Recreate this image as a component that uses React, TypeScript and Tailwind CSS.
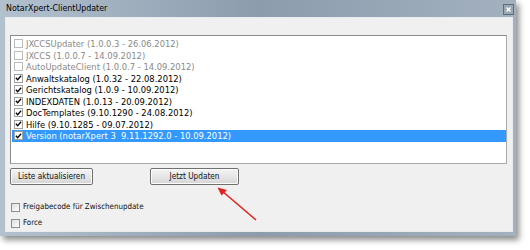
import React from "react";

type Item = { label: string; checked: boolean; disabled?: boolean; selected?: boolean };

const items: Item[] = [
  { label: "JXCCSUpdater (1.0.0.3 - 26.06.2012)", checked: false, disabled: true },
  { label: "JXCCS (1.0.0.7 - 14.09.2012)", checked: false, disabled: true },
  { label: "AutoUpdateClient (1.0.0.7 - 14.09.2012)", checked: false, disabled: true },
  { label: "Anwaltskatalog (1.0.32 - 22.08.2012)", checked: true },
  { label: "Gerichtskatalog (1.0.9 - 10.09.2012)", checked: true },
  { label: "INDEXDATEN (1.0.13 - 20.09.2012)", checked: true },
  { label: "DocTemplates (9.10.1290 - 24.08.2012)", checked: true },
  { label: "Hilfe (9.10.1285 - 09.07.2012)", checked: true },
  { label: "Version (notarXpert 3\u00a0\u00a09.11.1292.0 - 10.09.2012)", checked: true, selected: true },
];

const Check = () => (
  <svg width="8" height="8" viewBox="0 0 8 8" className="block">
    <path d="M1 3.8 L3 5.9 L7 1.4" fill="none" stroke="#000" strokeWidth="1.5" />
  </svg>
);

const ListRow = ({ item }: { item: Item }) => (
  <div
    className={`flex items-center h-[11.5px] ${item.selected ? "bg-[#3399ff] text-white" : item.disabled ? "text-[#8a8a8a]" : "text-black"}`}
  >
    <div className="w-[12px] flex justify-center">
      <div
        className={`w-[9px] h-[9px] flex items-center justify-center bg-white border ${item.disabled ? "border-[#bcbcbc]" : "border-[#a0a0a0]"}`}
      >
        {item.checked && <Check />}
      </div>
    </div>
    <span className="ml-[1px] pl-[1px] pr-[2px] leading-[11px] whitespace-nowrap">{item.label}</span>
  </div>
);

const WinButton = ({ label, width }: { label: string; width: string }) => (
  <button
    className={`${width} h-[17px] text-[8.2px] leading-none whitespace-nowrap text-[#111] rounded-[2px] border border-[#707070] bg-gradient-to-b from-[#f4f4f4] via-[#e6e6e6] to-[#d4d4d4] shadow-[inset_0_0_0_1px_#fcfcfc]`}
  >
    {label}
  </button>
);

const BottomCheck = ({ label }: { label: string }) => (
  <div className="flex items-center h-[10px]">
    <div className="w-[9px] h-[9px] bg-gradient-to-br from-[#dcdcdc] to-[#ffffff] border border-[#8e8f8f]" />
    <span className="ml-[3px] text-[7.9px] leading-none text-[#111] whitespace-nowrap">{label}</span>
  </div>
);

export default function App() {
  return (
    <div
      className="relative w-[530px] h-[250px] bg-white overflow-hidden"
      style={{ fontFamily: "'DejaVu Sans Condensed', 'Liberation Sans', sans-serif" }}
    >
      <div className="w-[516px] h-[236px] flex flex-col bg-gradient-to-r from-[#b3c1cf] via-[#8c9cad] to-[#a3b1bf] shadow-[3px_4px_6px_rgba(0,0,0,0.45)] pl-[5px] pr-[3px] pb-[4px]">
        {/* title bar */}
        <div className="h-[17px] shrink-0 flex items-center justify-between">
          <span className="text-[8.8px] text-black pl-[1px] leading-none">NotarXpert-ClientUpdater</span>
          <div className="mr-[-1px] mt-[1px] w-[11px] h-[11px] border border-[#5f6d7b] bg-[#9aa7b4] flex items-center justify-center">
            <svg width="5" height="5" viewBox="0 0 5 5">
              <path d="M0.5 0.5 L4.5 4.5 M4.5 0.5 L0.5 4.5" stroke="#fff" strokeWidth="1.4" />
            </svg>
          </div>
        </div>

        {/* client area */}
        <div className="flex-1 flex flex-col bg-[#f0f0f0] border border-[#e8ecf0] pl-[4px] pr-[5px] pt-[17px]">
          <div className="h-[129px] shrink-0 bg-white border border-[#a8a8a8] border-t-[#8a8a8a] border-l-[#8a8a8a] pt-[2px] pl-[1px] text-[9.3px]">
            {items.map((it) => (
              <ListRow key={it.label} item={it} />
            ))}
          </div>

          <div className="flex items-start mt-[4px]">
            <WinButton label="Liste aktualisieren" width="w-[83px]" />
            <div className="flex ml-[57px]">
              <WinButton label="Jetzt Updaten" width="w-[89px]" />
            </div>
          </div>

          <div className="flex flex-col mt-[17px] pl-[1px] gap-[6px]">
            <BottomCheck label="Freigabecode für Zwischenupdate" />
            <BottomCheck label="Force" />
          </div>
        </div>
      </div>

      {/* red annotation arrow */}
      <svg className="absolute left-0 top-0 pointer-events-none" width="530" height="250">
        <line x1="256" y1="220" x2="222" y2="191" stroke="#e3201e" strokeWidth="1.6" />
        <path d="M217.5 187.5 L227 190 L221.5 195.5 Z" fill="#e3201e" />
      </svg>
    </div>
  );
}
